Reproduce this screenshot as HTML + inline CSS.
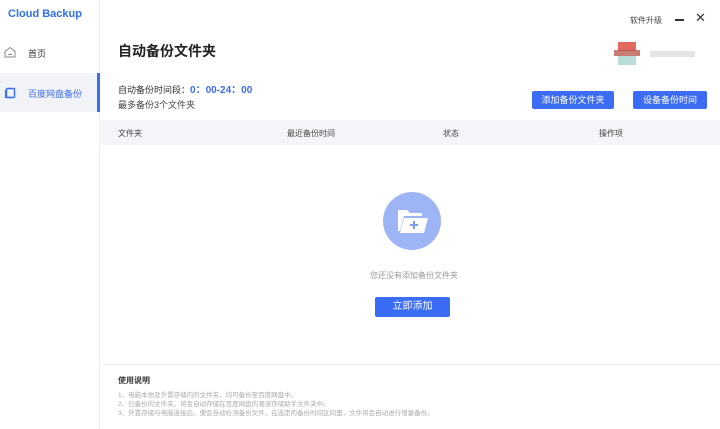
<!DOCTYPE html><html><head><meta charset="utf-8"><style>
*{margin:0;padding:0;box-sizing:border-box}
body{width:720px;height:429px;overflow:hidden;background:#fff;font-family:"Liberation Sans","Noto Sans CJK SC",sans-serif;position:relative;color:#333}
.a{position:absolute;white-space:nowrap}
.side{position:absolute;left:0;top:0;width:100px;height:429px;background:#fff;border-right:1px solid #eceef2}
.btn{position:absolute;background:#3a6cf6;color:#fff;font-size:9px;text-align:center;border-radius:2px}
</style></head><body>
<div class="side"></div>
<div class="a" style="left:8px;top:8px;font-size:11px;font-weight:bold;color:#2f6ff2">Cloud Backup</div>
<svg class="a" style="left:4px;top:46px" width="12" height="12" viewBox="0 0 12 12"><path d="M1 5.5L6 1.5L11 5.5V11H1Z" fill="none" stroke="#888" stroke-width="1"/><path d="M4 8.5h4" stroke="#888"/></svg>
<div class="a" style="left:28px;top:47px;font-size:9px;color:#333">首页</div>
<div class="a" style="left:0;top:73px;width:100px;height:39px;background:#f2f3f6;border-right:3px solid #3a6cf6"></div>
<svg class="a" style="left:4px;top:87px" width="12" height="12" viewBox="0 0 12 12"><rect x="2.5" y="1.5" width="8" height="9" rx="1" fill="none" stroke="#3a6cf6" stroke-width="1.4"/><path d="M1.5 3v7.5h7" fill="none" stroke="#3a6cf6" stroke-width="1.2"/></svg>
<div class="a" style="left:28px;top:87px;font-size:9px;color:#3a6cf6">百度网盘备份</div>
<div class="a" style="left:630px;top:15px;font-size:8px;color:#444">软件升级</div>
<div class="a" style="left:675px;top:19px;width:9px;height:1.5px;background:#333"></div>
<div class="a" style="left:695px;top:10px;font-size:13px;color:#333">✕</div>
<div class="a" style="left:618px;top:42px;width:18px;height:9px;background:#e0584c;opacity:.9"></div>
<div class="a" style="left:614px;top:50px;width:26px;height:6px;background:#b5524a;opacity:.75"></div>
<div class="a" style="left:618px;top:56px;width:18px;height:9px;background:#8cc7bd;opacity:.6"></div>
<div class="a" style="left:650px;top:51px;width:45px;height:6px;background:#e4e4e4"></div>
<div class="a" style="left:118px;top:41px;font-size:14px;font-weight:bold;color:#222">自动备份文件夹</div>
<div class="a" style="left:118px;top:81px;font-size:9px;color:#333">自动备份时间段：<span style="color:#3a6cf6;font-weight:bold;font-size:10px">0：00-24：00</span></div>
<div class="a" style="left:118px;top:98px;font-size:9px;color:#444">最多备份3个文件夹</div>
<div class="btn" style="left:532px;top:91px;width:82px;height:18px;line-height:18px">添加备份文件夹</div>
<div class="btn" style="left:633px;top:91px;width:74px;height:18px;line-height:18px">设备备份时间</div>
<div class="a" style="left:101px;top:120px;width:619px;height:25px;background:#f3f5f8"></div>
<div class="a" style="left:118px;top:128px;font-size:8px;color:#444">文件夹</div>
<div class="a" style="left:287px;top:128px;font-size:8px;color:#444">最近备份时间</div>
<div class="a" style="left:443px;top:128px;font-size:8px;color:#444">状态</div>
<div class="a" style="left:599px;top:128px;font-size:8px;color:#444">操作项</div>
<div class="a" style="left:383px;top:192px;width:58px;height:58px;border-radius:50%;background:#9db4f5"></div>
<svg class="a" style="left:396px;top:207px" width="34" height="28" viewBox="0 0 34 28"><path d="M2 3h9l3 3h12v3H8L4 24H2Z" fill="#fff"/><path d="M8 11h24l-4 15H4Z" fill="#fff"/><path d="M18 14v8M14 18h8" stroke="#7e9cf0" stroke-width="2"/></svg>
<div class="a" style="left:370px;top:270px;font-size:8px;color:#999">您还没有添加备份文件夹</div>
<div class="btn" style="left:375px;top:297px;width:75px;height:20px;line-height:20px;font-size:10px">立即添加</div>
<div class="a" style="left:101px;top:364px;width:619px;height:1px;background:#f0f1f3"></div>
<div class="a" style="left:118px;top:375px;font-size:8px;font-weight:bold;color:#333">使用说明</div>
<div class="a" style="left:118px;top:391px;font-size:6.5px;color:#aaa;line-height:9px">1、电脑本地及外置存储内的文件夹，均可备份至百度网盘中。<br>2、已备份的文件夹，将会自动存储在百度网盘的潮流存储助手文件夹中。<br>3、外置存储与电脑连接后，便会自动检测备份文件，在选定的备份时间区间里，文件将会自动进行增量备份。</div>
</body></html>
